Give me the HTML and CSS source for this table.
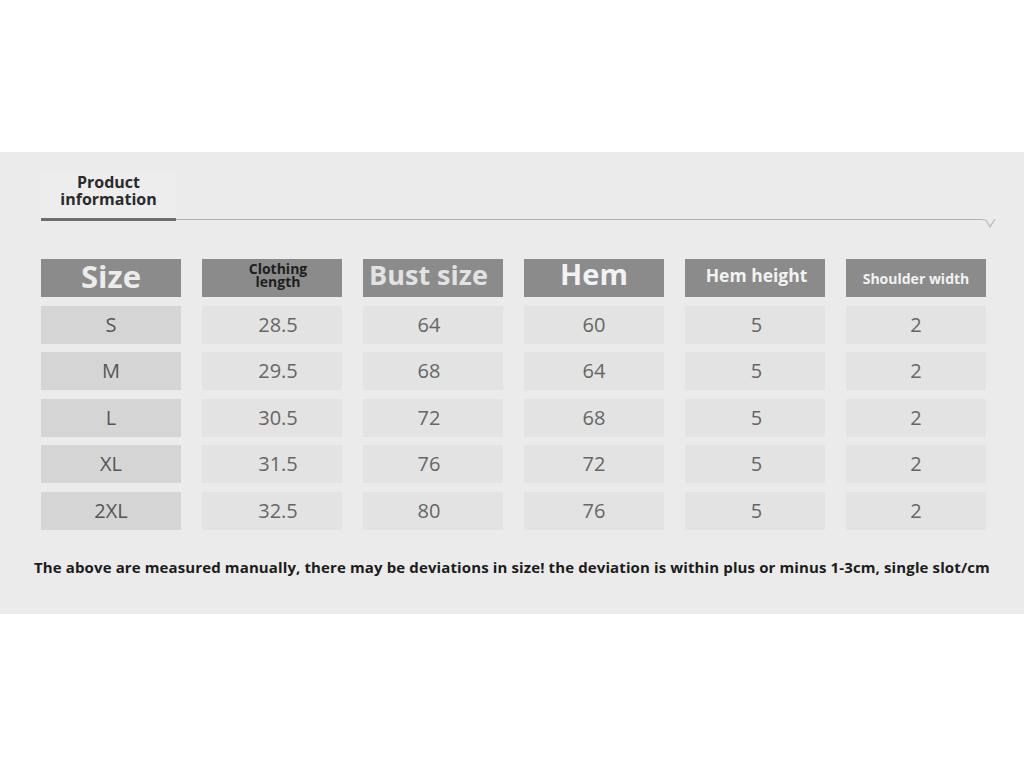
FILE: index.html
```html
<!DOCTYPE html>
<html>
<head>
<meta charset="utf-8">
<link rel="stylesheet" href="styles.css">
</head>
<body>
<div class="top-space"></div>
<section class="panel">
  <div class="tab">
    <div class="tab-title"><span class="tl">Product</span><span class="tl">information</span></div>
  </div>
  <div class="rule">
    <div class="rule-dark"></div>
    <div class="rule-thin"></div>
    <svg class="rule-end" width="14" height="10" viewBox="0 0 14 10"><polyline points="0,1 3,1 7,8 12,0" fill="none" stroke="#b8b8b8" stroke-width="1.2"/></svg>
  </div>
  <div class="table">
    <div class="head h-size">Size</div>
    <div class="head h-length"><span class="tl">Clothing</span><span class="tl">length</span></div>
    <div class="head h-bust">Bust size</div>
    <div class="head h-hem">Hem</div>
    <div class="head h-hemh">Hem height</div>
    <div class="head h-shoulder">Shoulder width</div>

    <div class="cell size">S</div><div class="cell c2">28.5</div><div class="cell c3">64</div><div class="cell">60</div><div class="cell c5">5</div><div class="cell">2</div>
    <div class="cell size">M</div><div class="cell c2">29.5</div><div class="cell c3">68</div><div class="cell">64</div><div class="cell c5">5</div><div class="cell">2</div>
    <div class="cell size">L</div><div class="cell c2">30.5</div><div class="cell c3">72</div><div class="cell">68</div><div class="cell c5">5</div><div class="cell">2</div>
    <div class="cell size">XL</div><div class="cell c2">31.5</div><div class="cell c3">76</div><div class="cell">72</div><div class="cell c5">5</div><div class="cell">2</div>
    <div class="cell size">2XL</div><div class="cell c2">32.5</div><div class="cell c3">80</div><div class="cell">76</div><div class="cell c5">5</div><div class="cell">2</div>
  </div>
  <p class="note">The above are measured manually, there may be deviations in size! the deviation is within plus or minus 1-3cm, single slot/cm</p>
</section>
</body>
</html>
```
FILE: styles.css
```css
html, body {
  margin: 0;
  padding: 0;
  background: #ffffff;
  font-family: "Open Sans", "Noto Sans", sans-serif;
}
.top-space {
  height: 152px;
}
.panel {
  background: #ebebeb;
  height: 462px;
  box-sizing: border-box;
  padding-top: 19px;
  display: flex;
  flex-direction: column;
}
.tab {
  margin-left: 41px;
  width: 135px;
  height: 47px;
  background: #ededed;
  display: flex;
  align-items: flex-start;
  justify-content: center;
}
.tl {
  display: block;
}
.tab-title {
  font-size: 16px;
  font-weight: 700;
  line-height: 17px;
  color: #2a2a2a;
  text-align: center;
  margin-top: 3px;
}
.rule {
  margin-left: 41px;
  width: 956px;
  display: flex;
  align-items: flex-start;
  height: 10px;
}
.rule-dark {
  width: 135px;
  height: 2.5px;
  background: #6e6e6e;
}
.rule-thin {
  width: 809px;
  height: 1px;
  margin-top: 1px;
  background: #b3b3b3;
}
.rule-end {
  display: block;
  margin-top: 1px;
}
.table {
  margin-top: 31px;
  margin-left: 41px;
  display: grid;
  grid-template-columns: repeat(6, 140px);
  grid-template-rows: 38px repeat(5, 38px);
  column-gap: 21px;
  row-gap: 8.5px;
}
.head {
  background: #8b8b8b;
  display: flex;
  flex-direction: column;
  align-items: center;
  justify-content: center;
  text-align: center;
  font-weight: 700;
  color: #f2f2f2;
  box-sizing: border-box;
}
.h-size {
  font-size: 31px;
  color: #ececec;
  padding-bottom: 5px;
}
.h-length {
  font-size: 14px;
  line-height: 13px;
  color: #1e1e1e;
  padding-bottom: 6px;
  padding-left: 12px;
}
.h-bust {
  font-size: 27px;
  color: #e2e2e2;
  padding-bottom: 8px;
  padding-right: 9px;
}
.h-hem {
  font-size: 29px;
  padding-bottom: 10px;
}
.h-hemh {
  font-size: 17.5px;
  padding-bottom: 7px;
  padding-left: 3px;
}
.h-shoulder {
  font-size: 14px;
  padding-top: 0;
}
.cell {
  background: #e3e3e3;
  display: flex;
  align-items: center;
  justify-content: center;
  font-size: 20px;
  font-weight: 400;
  color: #666666;
  padding-bottom: 1px;
  box-sizing: border-box;
}
.cell.c2 {
  padding-left: 12px;
}
.cell.c3 {
  padding-right: 8px;
}
.cell.c5 {
  padding-left: 3px;
}
.cell.size {
  background: #d5d5d5;
  color: #555555;
}
.note {
  margin: 27px 0 0 34px;
  font-size: 15px;
  line-height: 20px;
  font-weight: 700;
  letter-spacing: 0.12px;
  color: #1c1c1c;
  white-space: nowrap;
}
```
